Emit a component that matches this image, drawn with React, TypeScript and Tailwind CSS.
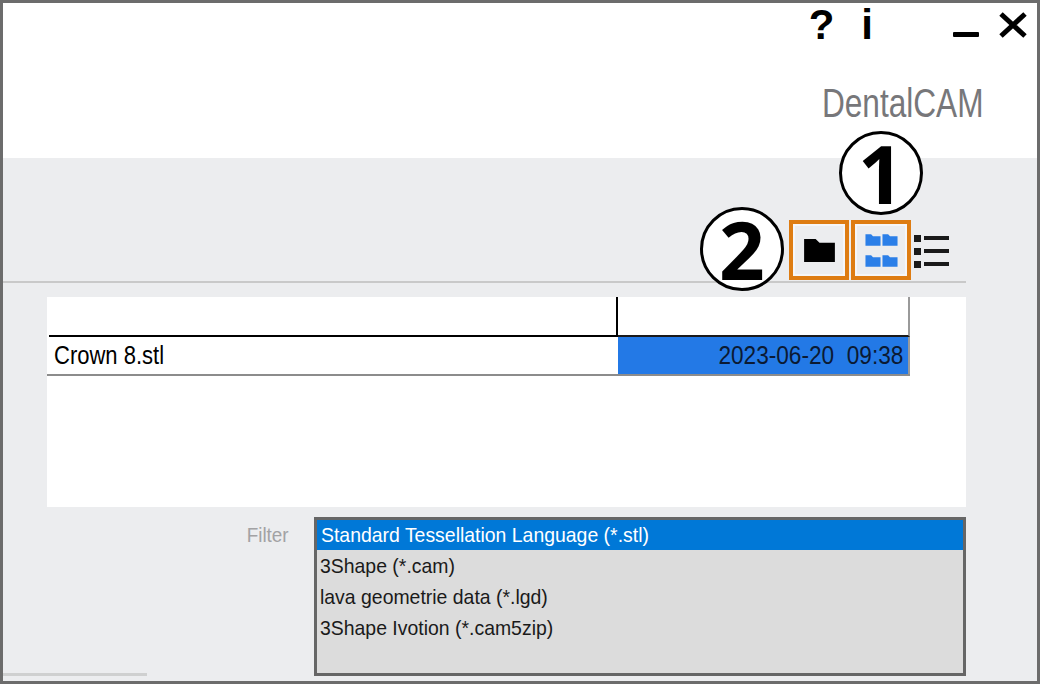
const filters = [
  'Standard Tessellation Language (*.stl)',
  '3Shape (*.cam)',
  'lava geometrie data (*.lgd)',
  '3Shape Ivotion (*.cam5zip)',
];

const FolderIcon = ({ className }: { className: string }) => (
  <svg viewBox="0 0 34 26" className={className} fill="currentColor">
    <path d="M1 1h12l4 4h16v20H1z" />
  </svg>
);

const Badge = ({ n, className }: { n: string; className: string }) => (
  <div
    className={`absolute w-[84px] h-[84px] rounded-full border-[3px] border-black bg-white flex items-center justify-center font-['Noto_Sans',sans-serif] font-bold text-[80px] leading-none text-black ${className}`}
  >
    {n}
  </div>
);

const App = () => {
  return (
    <div className="w-[1040px] h-[684px] border-[3px] border-[#6c6c6c] bg-[#ecedef] flex flex-col font-['Liberation_Sans',sans-serif] overflow-hidden">
      <header className="h-[155px] bg-white relative shrink-0 flex flex-col items-end">
        <div className="h-[60px] w-full flex items-start justify-end text-black font-bold text-[42px] leading-none">
          <span className="mt-[1px] mr-[27px]">?</span>
          <span className="mt-[1px] mr-[80px]">i</span>
          <div className="w-[26px] h-[5px] bg-black mt-[29px] mr-[20px] rounded-[1px]" />
          <svg viewBox="0 0 28 26" className="w-[28px] h-[26px] mt-[9px] mr-[10px]" stroke="black" strokeWidth="5" fill="none">
            <path d="M2 2l24 22M26 2L2 24" />
          </svg>
        </div>
        <div className="mt-[18px] mr-[53px] text-[40px] leading-[44px] text-[#77777a] scale-x-[0.79] origin-right whitespace-nowrap">
          DentalCAM
        </div>
      </header>

      <div className="relative h-[125px] shrink-0 w-[963px] border-b-2 border-[#c9c9c9] flex items-end justify-end pb-[1px]">
        <Badge n="1" className="right-[43px] top-[-27px]" />
        <Badge n="2" className="right-[182px] top-[49px]" />
        <div className="flex items-center gap-[2px] mr-[17px]">
          <div className="w-[60px] h-[60px] border-[4px] border-[#de7c12] outline outline-2 -outline-offset-[6px] outline-[#f6f6f7] flex items-center justify-center text-black">
            <FolderIcon className="w-[33px] h-[25px]" />
          </div>
          <div className="w-[60px] h-[60px] border-[4px] border-[#de7c12] outline outline-2 -outline-offset-[6px] outline-[#f6f6f7] grid grid-cols-2 place-content-center justify-center gap-x-[2px] gap-y-[7px] text-[#2b7fe8] px-[10px]">
            <FolderIcon className="w-[16px] h-[14px]" />
            <FolderIcon className="w-[16px] h-[14px]" />
            <FolderIcon className="w-[16px] h-[14px]" />
            <FolderIcon className="w-[16px] h-[14px]" />
          </div>
          <div className="w-[35px] h-[33px] ml-[1px] mt-[2px] flex flex-col justify-between">
            {[0, 1, 2].map((i) => (
              <div key={i} className="flex items-center gap-[3px]">
                <div className="w-[7px] h-[7px] bg-[#1a1a1a]" />
                <div className="w-[25px] h-[4px] bg-[#1a1a1a]" />
              </div>
            ))}
          </div>
        </div>
      </div>

      <div className="ml-[44px] mt-[14px] w-[919px] h-[210px] bg-white shrink-0">
        <div className="w-[863px] h-[79px] flex flex-col">
          <div className="h-[40px] pl-[2px] flex shrink-0">
            <div className="w-[569px] border-b-2 border-r-2 border-black" />
            <div className="flex-1 border-b-2 border-b-[#1a1a1a] border-r-2 border-r-[#9a9a9a]" />
          </div>
          <div className="flex-1 flex border-b-2 border-[#8c8c8c]">
            <div className="w-[571px] pl-[7px] text-[25px] leading-[37px] text-black">
              <span className="inline-block scale-x-[0.88] origin-left whitespace-nowrap">Crown 8.stl</span>
            </div>
            <div className="flex-1 bg-[#2379e6] border-r-2 border-[#9a9a9a] text-right pr-[5px] text-[25px] leading-[37px] text-[#0b1a33]">
              <span className="inline-block scale-x-[0.905] origin-right whitespace-pre">2023-06-20  09:38</span>
            </div>
          </div>
        </div>
      </div>

      <div className="flex-1 flex mt-[10px] min-h-0">
        <div className="w-[144px] flex items-end">
          <div className="w-full h-[3px] bg-[#cfd0d0] mb-[5px]" />
        </div>
        <div className="w-[167px] pr-[25px] pt-[5px] text-right text-[21px] leading-[26px] text-[#a2a2a4]">
          <span className="inline-block scale-x-[0.9] origin-right">Filter</span>
        </div>
        <div className="w-[652px] mb-[5px] border-[3px] border-[#666] bg-[#dcdcdc] pb-[2px]">
          {filters.map((f, i) => (
            <div
              key={f}
              className={
                i === 0
                  ? 'h-[30px] bg-[#0078d7] text-white text-[21px] leading-[30px] pl-[4px] whitespace-nowrap'
                  : 'h-[31px] text-[#1a1a1a] text-[21px] leading-[31px] pl-[3px] whitespace-nowrap'
              }
            >
              <span className="inline-block scale-x-[0.925] origin-left">{f}</span>
            </div>
          ))}
        </div>
      </div>
    </div>
  );
};

export default App;
